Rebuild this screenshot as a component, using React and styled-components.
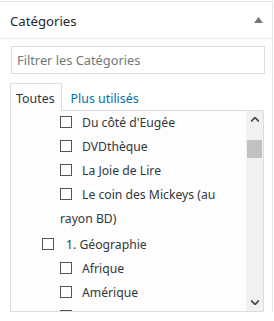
import React from "react";
import styled, { createGlobalStyle } from "styled-components";

const GlobalStyle = createGlobalStyle`
  html, body {
    margin: 0;
    padding: 0;
    background: #fff;
  }
  body {
    font-family: "Segoe UI", "Noto Sans", "Open Sans", sans-serif;
    color: #444;
  }
`;

const Page = styled.div`
  width: 274px;
  height: 321px;
  padding-top: 1px;
  box-sizing: border-box;
  overflow: hidden;
  background: #fff;
`;

const Postbox = styled.div`
  width: 273px;
  border-top: 1px solid #e5e5e5;
  border-right: 1px solid #e5e5e5;
  box-sizing: border-box;
`;

const Header = styled.div`
  display: flex;
  align-items: center;
  justify-content: space-between;
  height: 36px;
  padding: 0 9px 0 10px;
  border-bottom: 1px solid #eee;
`;

const Title = styled.h2`
  margin: 0;
  padding-top: 2px;
  font-size: 13.2px;
  font-weight: 400;
  color: #23282d;
`;

const Inside = styled.div`
  padding: 7px 0 0 10px;
`;

const Search = styled.input`
  display: block;
  margin-left: 1px;
  width: 254px;
  height: 28px;
  box-sizing: border-box;
  border: 1px solid #ddd;
  padding: 0 5px;
  font: inherit;
  font-size: 12.8px;
  color: #32373c;
  outline: none;
  &::placeholder {
    color: #72777c;
  }
`;

const Tabs = styled.div`
  display: flex;
  align-items: flex-end;
  margin-top: 9px;
`;

const Tab = styled.div`
  position: relative;
  z-index: 1;
  height: 28px;
  box-sizing: border-box;
  padding: 0 6px 0 5px;
  margin-right: ${(p) => (p.$active ? "3px" : "0")};
  margin-bottom: -1px;
  line-height: 29px;
  font-size: 12.4px;
  color: ${(p) => (p.$active ? "#32373c" : "#0073aa")};
  background: ${(p) => (p.$active ? "#fdfdfd" : "transparent")};
  border: 1px solid ${(p) => (p.$active ? "#ddd" : "transparent")};
  border-bottom: none;
`;

const Panel = styled.div`
  display: flex;
  width: 254px;
  height: 202px;
  box-sizing: border-box;
  border: 1px solid #ddd;
  background: #fdfdfd;
`;

const List = styled.ul`
  flex: 1;
  margin: 0;
  padding: 0 6px 0 31px;
  list-style: none;
  overflow: hidden;
`;

const Item = styled.li`
  padding-left: ${(p) => p.$level * 18}px;
  margin-bottom: ${(p) => (p.$wrapped ? "2px" : "0")};
  line-height: 24px;
  font-size: 12.2px;
  color: #32373c;
`;

const Box = styled.input.attrs({ type: "checkbox" })`
  appearance: none;
  display: inline-block;
  width: 12px;
  height: 12px;
  margin: 0 ${(p) => (p.$level ? 10 : 12)}px 0 0;
  box-sizing: border-box;
  border: 1px solid #555;
  background: #fff;
  vertical-align: -1px;
`;

const Scrollbar = styled.div`
  display: flex;
  flex-direction: column;
  width: 17px;
  background: #f1f1f1;
`;

const Arrow = styled.div`
  display: flex;
  align-items: center;
  justify-content: center;
  height: 17px;
`;

const Track = styled.div`
  flex: 1;
  padding: 12px 1px 0 1px;
`;

const Thumb = styled.div`
  height: 18px;
  background: #c1c1c1;
`;

const Chevron = ({ up }) => (
  <svg width="8" height="5" viewBox="0 0 8 5">
    <path
      d={up ? "M0 4.5 L4 0.5 L8 4.5" : "M0 0.5 L4 4.5 L8 0.5"}
      fill="none"
      stroke="#505050"
      strokeWidth="1.8"
    />
  </svg>
);

const items = [
  { level: 1, label: "Du côté d'Eugée" },
  { level: 1, label: "DVDthèque" },
  { level: 1, label: "La Joie de Lire" },
  { level: 1, label: "Le coin des Mickeys (au rayon BD)", wrapped: true },
  { level: 0, label: "1. Géographie" },
  { level: 1, label: "Afrique" },
  { level: 1, label: "Amérique" },
  { level: 1, label: "Asie" },
];

export default function App() {
  return (
    <Page>
      <GlobalStyle />
      <Postbox>
        <Header>
          <Title>Catégories</Title>
          <svg width="9" height="6" viewBox="0 0 9 6">
            <path d="M0 6 L4.5 0 L9 6 Z" fill="#72777c" />
          </svg>
        </Header>
        <Inside>
          <Search placeholder="Filtrer les Catégories" />
          <Tabs>
            <Tab $active>Toutes</Tab>
            <Tab>Plus utilisés</Tab>
          </Tabs>
          <Panel>
            <List>
              {items.map((it) => (
                <Item key={it.label} $level={it.level} $wrapped={it.wrapped}>
                  <label>
                    <Box $level={it.level} />
                    {it.label}
                  </label>
                </Item>
              ))}
            </List>
            <Scrollbar>
              <Arrow>
                <Chevron up />
              </Arrow>
              <Track>
                <Thumb />
              </Track>
              <Arrow>
                <Chevron />
              </Arrow>
            </Scrollbar>
          </Panel>
        </Inside>
      </Postbox>
    </Page>
  );
}
